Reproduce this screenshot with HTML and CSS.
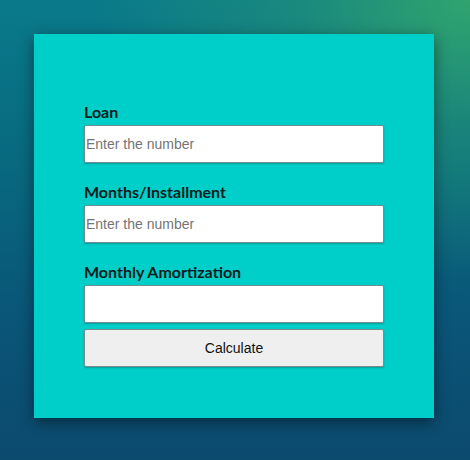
FILE: index.html
```html
<!DOCTYPE html>
<html lang="en">
<head>
<meta charset="utf-8">
<title>Amortization Calculator</title>
<link rel="stylesheet" href="styles.css">
</head>
<body>
<main class="card">
  <form class="calc">
    <label class="field-label" for="loan">Loan</label>
    <input class="field" id="loan" type="text" placeholder="Enter the number">
    <label class="field-label" for="months">Months/Installment</label>
    <input class="field" id="months" type="text" placeholder="Enter the number">
    <label class="field-label" for="result">Monthly Amortization</label>
    <input class="field field-last" id="result" type="text">
    <button class="btn" type="button">Calculate</button>
  </form>
</main>
</body>
</html>
```
FILE: styles.css
```css
html, body {
  margin: 0;
  height: 100%;
}
body {
  background:
    radial-gradient(ellipse 380px 280px at 100% 0%, rgba(48, 164, 110, 1) 0%, rgba(36, 148, 118, 0.6) 45%, rgba(20, 130, 130, 0) 100%),
    linear-gradient(to bottom, #0a7a8b 0%, #08697f 35%, #0a5578 70%, #0c4a6e 100%);
  padding: 34px;
  box-sizing: border-box;
  font-family: "Liberation Sans", Arial, sans-serif;
}
.card {
  width: 400px;
  height: 384px;
  box-sizing: border-box;
  background: #00cfc9;
  padding: 68px 50px 50px;
  box-shadow: 0 4px 14px rgba(0, 0, 0, 0.45);
}
.calc {
  display: flex;
  flex-direction: column;
}
.field-label {
  font-family: Lato, "Open Sans", sans-serif;
  font-weight: 700;
  font-size: 16px;
  line-height: 20px;
  color: #0a1c20;
  margin-bottom: 3px;
}
.field {
  height: 38px;
  box-sizing: border-box;
  border: 1px solid #6f8f90;
  border-radius: 2px;
  background: #fff;
  padding: 0 1px;
  font-family: "Liberation Sans", Arial, sans-serif;
  font-size: 14px;
  margin: 0 0 19px;
  box-shadow: 0 1px 2px rgba(0, 0, 0, 0.25);
}
.field::placeholder {
  color: #757575;
}
.field-last {
  margin-bottom: 6px;
}
.btn {
  height: 38px;
  border: 1px solid #7a8c8c;
  border-radius: 2px;
  background: #efefef;
  font-family: "Liberation Sans", Arial, sans-serif;
  font-size: 14px;
  color: #111;
  box-shadow: 0 1px 2px rgba(0, 0, 0, 0.25);
}
```
